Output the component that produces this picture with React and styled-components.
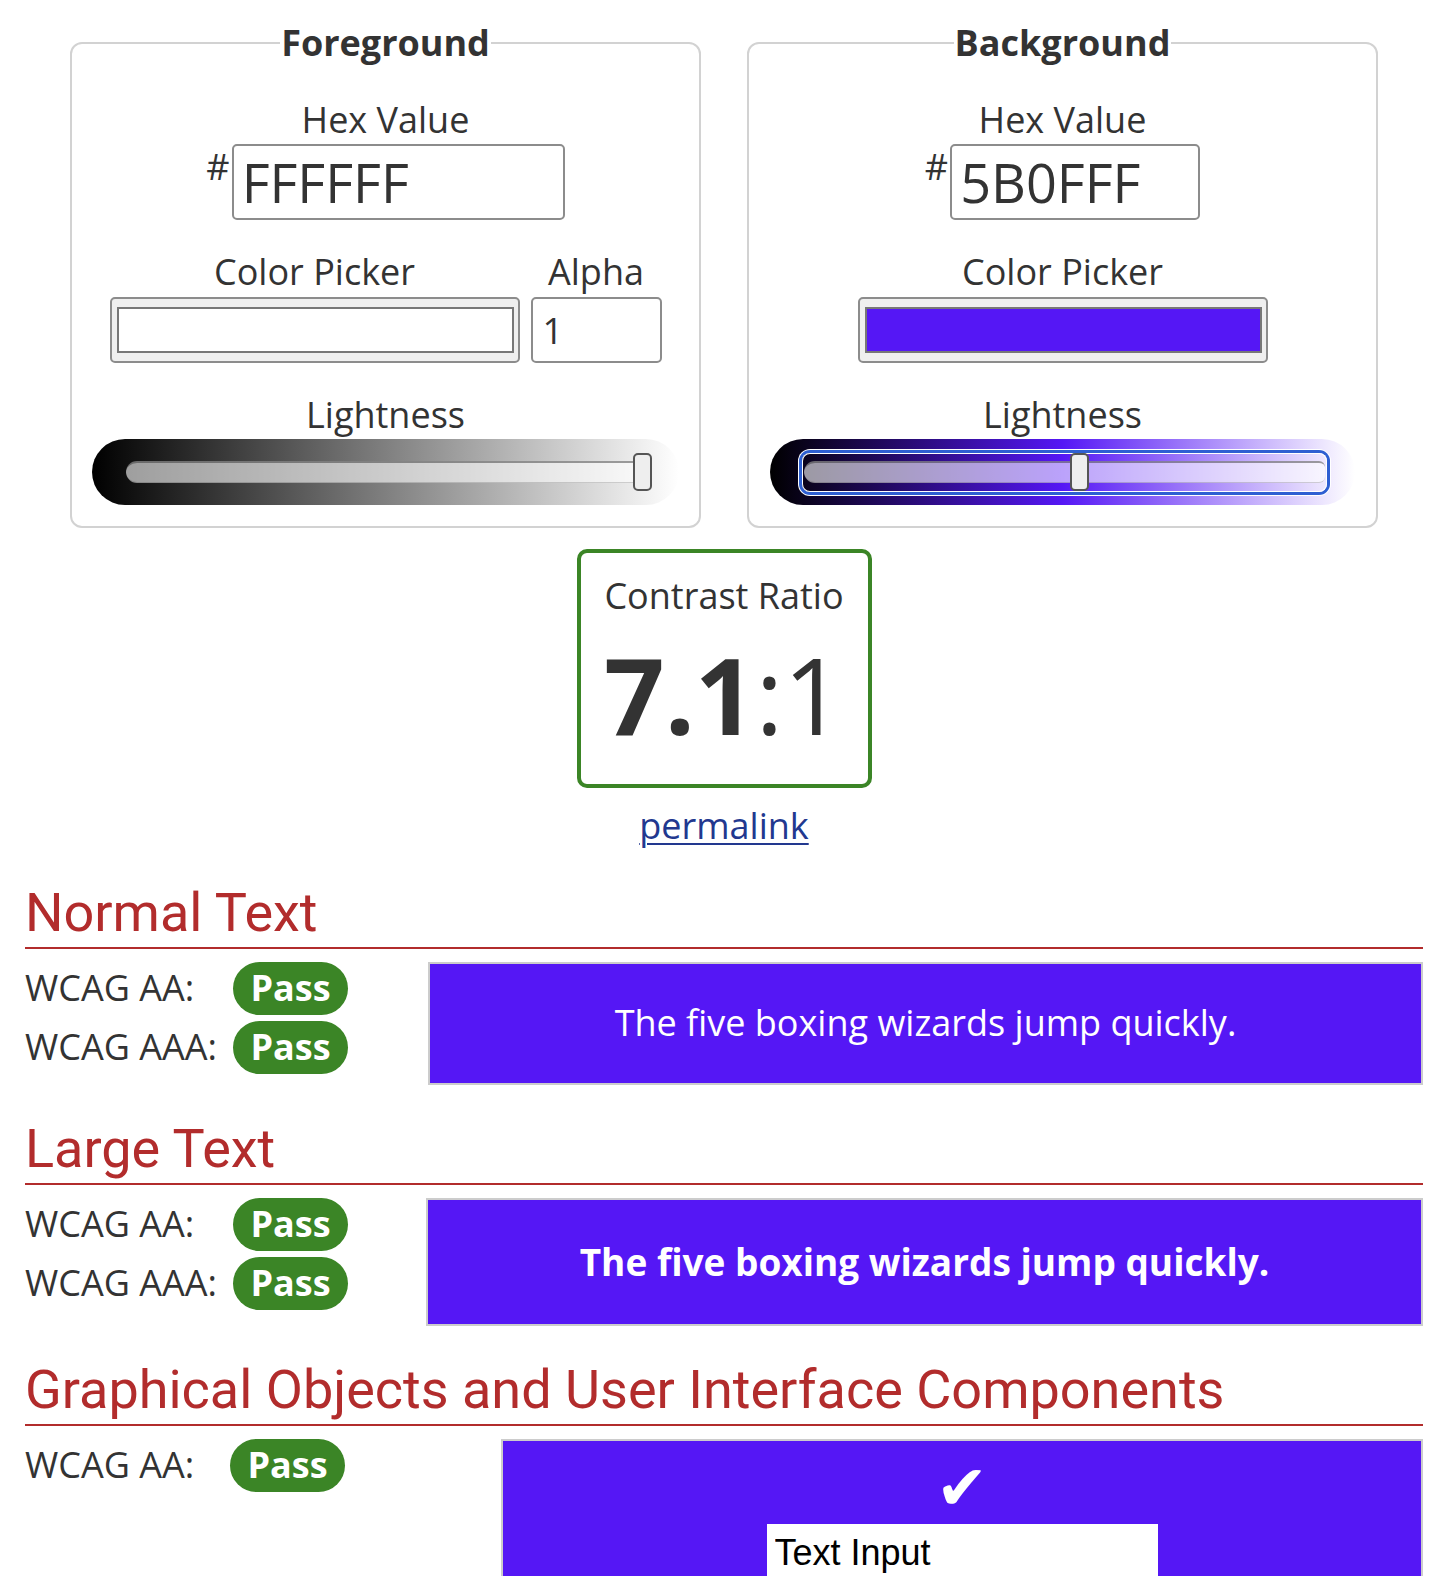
import React from "react";
import styled, { createGlobalStyle, css } from "styled-components";

const Global = createGlobalStyle`
  html, body { margin: 0; padding: 0; background: #fff; }
  body { font-family: "Open Sans", "DejaVu Sans", sans-serif; color: #333; }
  * { box-sizing: border-box; }
`;

const Page = styled.main`
  padding: 21px 25px 60px;
  font-size: 36px;
  line-height: 48px;
`;

const Panels = styled.div`
  display: flex;
  justify-content: center;
  gap: 46px;
`;

const Panel = styled.fieldset`
  width: 631px;
  min-width: 0;
  margin: 0;
  padding: 0 0 21px;
  border: 2px solid #d2d2d2;
  border-radius: 12px;
  display: flex;
  flex-direction: column;
  align-items: center;
`;

const Legend = styled.legend`
  margin: 0 auto;
  padding: 0 1px;
  font-size: 36px;
  font-weight: 700;
  line-height: 1.2;
  color: #333;
`;

const Label = styled.div`
  font-size: 36px;
  line-height: 48px;
  text-align: center;
  margin-top: ${(p) => p.$mt || 0}px;
`;

const HexRow = styled.div`
  display: flex;
  align-items: flex-start;
  gap: 2px;
  margin-top: 0;
`;

const Hash = styled.span`
  font-size: 36px;
  line-height: 48px;
  margin-top: -1px;
`;

const HexInput = styled.input`
  width: ${(p) => p.$w}px;
  height: 76px;
  border: 2px solid #8c8c8c;
  border-radius: 5px;
  padding: 0 8px;
  font-family: "Open Sans", sans-serif;
  font-size: 54px;
  color: #333;
  background: #fff;
  outline: none;
`;

const PickRow = styled.div`
  display: flex;
  gap: 11px;
  margin-top: 28px;
`;

const PickCol = styled.div`
  display: flex;
  flex-direction: column;
  align-items: center;
`;

const Picker = styled.div`
  width: 410px;
  height: 66px;
  margin-top: 1px;
  padding: 8px 4px 8px 5px;
  background: #efefef;
  border: 2px solid #8c8c8c;
  border-radius: 5px;
`;

const Swatch = styled.div`
  height: 100%;
  border: 2px solid #777;
  background: ${(p) => p.$color};
`;

const AlphaInput = styled.input`
  width: 131px;
  height: 66px;
  margin-top: 1px;
  border: 2px solid #8c8c8c;
  border-radius: 5px;
  padding: 0 10px;
  font-family: "Open Sans", sans-serif;
  font-size: 36px;
  color: #333;
  background: #fff;
  outline: none;
`;

const Pill = styled.div`
  width: ${(p) => p.$w}px;
  height: 66px;
  margin-top: 0;
  border-radius: 33px;
  background: ${(p) => p.$bg};
  display: flex;
  align-items: center;
  padding: 0 ${(p) => p.$pr}px 0 32px;
`;

const Range = styled.div`
  position: relative;
  flex: 1;
  height: 39px;
  display: flex;
  align-items: center;
  border-radius: 8px;
  ${(p) =>
    p.$focus &&
    css`
      box-shadow: inset 0 0 0 1px #fff, 0 0 0 3px #2e5fd2, 0 0 0 4px #fff;
    `}
`;

const Track = styled.div`
  width: 100%;
  height: 22px;
  margin: 0 2px;
  background: rgba(255, 255, 255, 0.6);
  border-top: 2px solid rgba(40, 40, 40, 0.45);
  border-bottom: 1px solid rgba(40, 40, 40, 0.2);
  border-radius: 11px 6px 6px 11px;
`;

const Thumb = styled.div`
  position: absolute;
  top: 50%;
  transform: translateY(-50%);
  width: 19px;
  height: 38px;
  border: 2px solid #555;
  border-radius: 5px;
  background: #eee;
`;

const RatioWrap = styled.div`
  display: flex;
  flex-direction: column;
  align-items: center;
  margin-top: 21px;
`;

const RatioBox = styled.div`
  width: 295px;
  height: 239px;
  border: 4px solid #3b8526;
  border-radius: 10px;
  padding-top: 19px;
  display: flex;
  flex-direction: column;
  align-items: center;
`;

const RatioValue = styled.div`
  margin-top: 21px;
  font-size: 106px;
  line-height: 1;
  color: #333;
  strong { font-weight: 700; }
`;

const Permalink = styled.a`
  margin-top: 14px;
  font-size: 36px;
  line-height: 48px;
  color: #22388f;
  text-decoration: underline;
  text-decoration-thickness: 2px;
  text-underline-offset: 4px;
`;

const Heading = styled.h2`
  margin: ${(p) => p.$mt}px 0 0;
  padding: 0 0 1px;
  font-family: Roboto, "Liberation Sans", sans-serif;
  font-weight: 400;
  font-size: 54px;
  line-height: 1.2;
  color: #b22c2c;
  border-bottom: 2px solid #b22c2c;
`;

const Results = styled.div`
  display: flex;
  align-items: flex-start;
  margin-top: 13px;
`;

const Checks = styled.div`
  width: ${(p) => p.$w}px;
  flex-shrink: 0;
  display: flex;
  flex-direction: column;
  gap: 6px;
`;

const CheckRow = styled.div`
  display: flex;
  align-items: center;
`;

const CheckLabel = styled.span`
  width: ${(p) => p.$w}px;
  flex-shrink: 0;
  font-size: 36px;
  line-height: 48px;
`;

const Badge = styled.span`
  width: 115px;
  height: 53px;
  border-radius: 27px;
  background: #3b8526;
  color: #fff;
  font-weight: 700;
  font-size: 36px;
  display: flex;
  align-items: center;
  justify-content: center;
`;

const Sample = styled.div`
  flex: 1;
  height: ${(p) => p.$h}px;
  border: 2px solid #ccc;
  background: #5517f5;
  color: #fff;
  display: flex;
  align-items: center;
  justify-content: center;
  font-size: ${(p) => p.$size}px;
  font-weight: ${(p) => (p.$bold ? 700 : 400)};
`;

const UISample = styled.div`
  flex: 1;
  height: 200px;
  border: 2px solid #ccc;
  background: #5517f5;
  display: flex;
  flex-direction: column;
  align-items: center;
  padding-top: 22px;
`;

const CheckGlyph = styled.span`
  font-family: "DejaVu Sans", sans-serif;
  font-size: 62px;
  line-height: 50px;
  height: 50px;
  color: #fff;
`;

const TextInput = styled.input`
  width: 391px;
  height: 58px;
  margin-top: 11px;
  border: none;
  padding: 0 8px;
  background: #fff;
  font-family: "Liberation Sans", Arial, sans-serif;
  font-size: 36px;
  color: #000;
  outline: none;
`;

function LightnessSlider({ width, pr, gradient, value, focus }) {
  return (
    <Pill $w={width} $pr={pr} $bg={gradient}>
      <Range $focus={focus}>
        <Track />
        <Thumb style={{ left: `calc(${value} * (100% - 19px))` }} />
      </Range>
    </Pill>
  );
}

function CheckList({ width, labelWidth, items }) {
  return (
    <Checks $w={width}>
      {items.map((l) => (
        <CheckRow key={l}>
          <CheckLabel $w={labelWidth}>{l}</CheckLabel>
          <Badge>Pass</Badge>
        </CheckRow>
      ))}
    </Checks>
  );
}

export default function App() {
  return (
    <>
      <Global />
      <Page>
        <Panels>
          <Panel>
            <Legend>Foreground</Legend>
            <Label $mt={32}>Hex Value</Label>
            <HexRow>
              <Hash>#</Hash>
              <HexInput $w={333} value="FFFFFF" readOnly />
            </HexRow>
            <PickRow>
              <PickCol>
                <Label>Color Picker</Label>
                <Picker>
                  <Swatch $color="#ffffff" />
                </Picker>
              </PickCol>
              <PickCol>
                <Label>Alpha</Label>
                <AlphaInput value="1" readOnly />
              </PickCol>
            </PickRow>
            <Label $mt={28}>Lightness</Label>
            <LightnessSlider
              width={587}
              pr={27}
              gradient="linear-gradient(to right, #000 0%, #fff 100%)"
              value={1}
            />
          </Panel>
          <Panel>
            <Legend>Background</Legend>
            <Label $mt={32}>Hex Value</Label>
            <HexRow>
              <Hash>#</Hash>
              <HexInput $w={250} value="5B0FFF" readOnly />
            </HexRow>
            <PickRow>
              <PickCol>
                <Label>Color Picker</Label>
                <Picker>
                  <Swatch $color="#5517f5" />
                </Picker>
              </PickCol>
            </PickRow>
            <Label $mt={28}>Lightness</Label>
            <LightnessSlider
              width={585}
              pr={28}
              gradient="linear-gradient(to right, #000 0%, #5517f5 50%, #fff 100%)"
              value={0.529}
              focus
            />
          </Panel>
        </Panels>

        <RatioWrap>
          <RatioBox>
            <Label>Contrast Ratio</Label>
            <RatioValue>
              <strong>7.1</strong>:1
            </RatioValue>
          </RatioBox>
          <Permalink href="#">permalink</Permalink>
        </RatioWrap>

        <Heading $mt={31}>Normal Text</Heading>
        <Results>
          <CheckList width={403} labelWidth={208} items={["WCAG AA:", "WCAG AAA:"]} />
          <Sample $h={123} $size={36}>
            The five boxing wizards jump quickly.
          </Sample>
        </Results>

        <Heading $mt={32}>Large Text</Heading>
        <Results>
          <CheckList width={401} labelWidth={208} items={["WCAG AA:", "WCAG AAA:"]} />
          <Sample $h={128} $size={37} $bold>
            The five boxing wizards jump quickly.
          </Sample>
        </Results>

        <Heading $mt={32}>Graphical Objects and User Interface Components</Heading>
        <Results>
          <CheckList width={476} labelWidth={205} items={["WCAG AA:"]} />
          <UISample>
            <CheckGlyph>✔</CheckGlyph>
            <TextInput value="Text Input" readOnly />
          </UISample>
        </Results>
      </Page>
    </>
  );
}
